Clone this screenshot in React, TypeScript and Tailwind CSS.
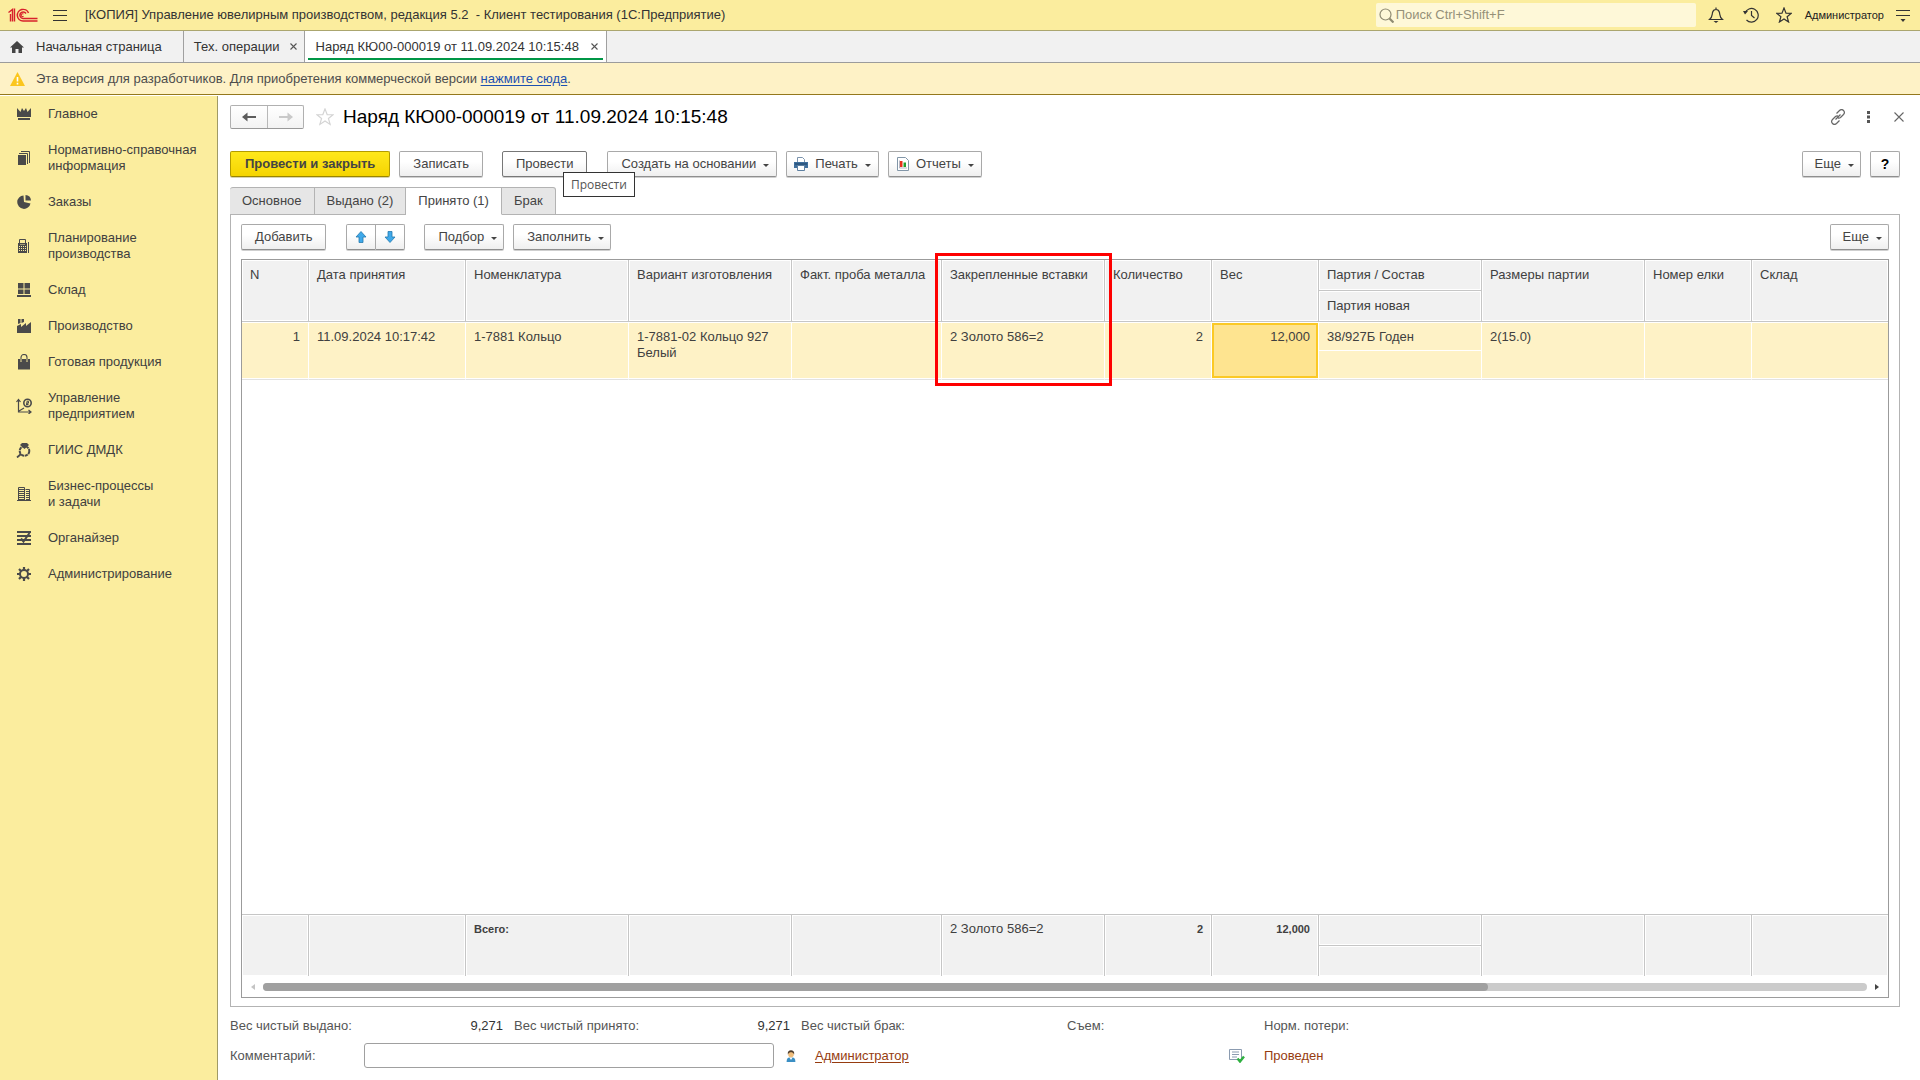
import React from "react";

const sections = [
  { icon: "crown", lines: ["Главное"] },
  { icon: "books", lines: ["Нормативно-справочная", "информация"] },
  { icon: "pie", lines: ["Заказы"] },
  { icon: "calc", lines: ["Планирование", "производства"] },
  { icon: "boxes", lines: ["Склад"] },
  { icon: "factory", lines: ["Производство"] },
  { icon: "bag", lines: ["Готовая продукция"] },
  { icon: "chart", lines: ["Управление", "предприятием"] },
  { icon: "ring", lines: ["ГИИС ДМДК"] },
  { icon: "building", lines: ["Бизнес-процессы", "и задачи"] },
  { icon: "organizer", lines: ["Органайзер"] },
  { icon: "gear", lines: ["Администрирование"] }
];

const sectionIcons: Record<string, React.ReactNode> = {
  crown: <path d="M1 2l3.500 4L6 2l2 3 2-3 1.500 4L15 2v9H1zM2 12h12v2H2z" fill="currentColor" />,
  books: (
    <>
      <path d="M2 5h8v10H2z" fill="currentColor" />
      <path d="M3 3.500h8.500V14M5 1.500h8.500V13" fill="none" stroke="currentColor" />
    </>
  ),
  pie: (
    <>
      <path d="M7.500 1.500a6.700 6.700 0 1 0 7 8L8 8z" fill="currentColor" />
      <path d="M9.500 1a6 6 0 0 1 5.500 5.500h-5.500z" fill="currentColor" />
    </>
  ),
  calc: (
    <>
      <path d="M3.500 6V1.500h6V6" fill="none" stroke="currentColor" />
      <path d="M2 5h9v10H2zM12 4h1v11h-1z" fill="currentColor" />
      <path d="M3 8.500h7M3 10.500h7M3 12.500h7" stroke="#fbed9e" strokeDasharray="1 1" />
      <path d="M4 6.500h5" stroke="#fbed9e" strokeWidth="0.500" />
    </>
  ),
  boxes: <path d="M2 1h5.500v5.500H2zM8.500 1H14v5.500H8.500zM2 7.500h5.500v4.500H2zM8.500 7.500H14V12H8.500zM1 13h14v2H1z" fill="currentColor" />,
  factory: <path d="M1 15V8l4-2v3l5-4v3l5-4v11zM2 1h2.500v4L2 6zM5.500 1H8v3L5.500 5z" fill="currentColor" />,
  bag: (
    <>
      <path d="M2 5h12v10.500H2z" fill="currentColor" />
      <path d="M5 7.500V4a3 3 0 0 1 6 0v3.500" fill="none" stroke="#fbed9e" strokeWidth="2" />
      <path d="M5 7V3.500a3 3 0 0 1 6 0V7" fill="none" stroke="currentColor" strokeWidth="1.100" />
    </>
  ),
  chart: (
    <>
      <path d="M2.500 2v12H14M0.500 4l2-2.500 2 2.500M12.500 12l2.500 2-2.500 2M3 13l5-3" fill="none" stroke="currentColor" strokeWidth="1.200" />
      <circle cx="11.500" cy="5" r="3.700" fill="none" stroke="currentColor" strokeWidth="1.600" />
      <path d="M11 7.500V3.200h1.500v2H10M10 6.500h2.500" fill="none" stroke="currentColor" />
    </>
  ),
  ring: (
    <>
      <path d="M6 1h5l2 2-4.500 4L4 3z" fill="currentColor" />
      <circle cx="8.500" cy="9" r="4.800" fill="none" stroke="currentColor" strokeWidth="2" strokeDasharray="3.200 0.700" />
      <path d="M5 12l-4 3.500" stroke="currentColor" strokeWidth="1.800" />
    </>
  ),
  building: (
    <>
      <path d="M2.500 14V1.500h6V14M9.500 3.500h4V14M1 14.500h14" fill="none" stroke="currentColor" />
      <path d="M3 3.500h5M3 5.500h5M3 7.500h5M3 9.500h5M3 11.500h5M3 13.500h5M10 5.500h3M10 7.500h3M10 9.500h3M10 11.500h3M10 13.500h3" stroke="currentColor" />
    </>
  ),
  organizer: (
    <>
      <path d="M1 2h14M1 6h14M1 10h14M1 14h14" stroke="currentColor" strokeWidth="2" />
      <path d="M5 8.500l2.500 3L13.500 3" fill="none" stroke="currentColor" strokeWidth="2" />
    </>
  ),
  gear: (
    <>
      <circle cx="8" cy="8" r="4" fill="none" stroke="currentColor" strokeWidth="2" />
      <path
        d="M8 1v3M8 12v3M1 8h3M12 8h3M3 3l2.200 2.200M10.800 10.800L13 13M13 3l-2.200 2.200M5.200 10.800L3 13"
        stroke="currentColor"
        strokeWidth="2.200"
      />
    </>
  )
};

const columns = [
  { title: "N", width: "w-[67px]" },
  { title: "Дата принятия", width: "w-[157px]" },
  { title: "Номенклатура", width: "w-[163px]" },
  { title: "Вариант изготовления", width: "w-[163px]" },
  { title: "Факт. проба металла", width: "w-[150px]" },
  { title: "Закрепленные вставки", width: "w-[163px]" },
  { title: "Количество", width: "w-[107px]" },
  { title: "Вес", width: "w-[107px]" },
  { title: "Партия / Состав", width: "w-[163px]" },
  { title: "Размеры партии", width: "w-[163px]" },
  { title: "Номер елки", width: "w-[107px]" },
  { title: "Склад", width: "w-auto" }
];

const WEIGHT = 7;
const PARTY = 8;
const row = ["1", "11.09.2024 10:17:42", "1-7881 Кольцо", "1-7881-02 Кольцо 927 Белый", "", "2 Золото 586=2", "2", "12,000", "38/927Б Годен", "2(15.0)", "", ""];
const totals = ["", "", "Всего:", "", "", "2 Золото 586=2", "2", "12,000", "", "", "", ""];
const isNumeric = (index: number) => index === 0 || index === 6 || index === WEIGHT;

// The active cell gets a yellow frame, the others only the white hairlines.
function cellFill(index: number) {
  if (index === WEIGHT) {
    return "border-b-[#e2e2e2] bg-[#fee490] shadow-[inset_0_1px_0_#fff,inset_0_-1px_0_#fff,inset_0_3px_0_#fbc926,inset_0_-3px_0_#fbc926,inset_2px_0_0_#fbc926,inset_-2px_0_0_#fbc926]";
  }
  if (index === PARTY) {
    return "bg-[#fef2c6] shadow-[inset_0_1px_0_#fff]";
  }
  return "border-b-[#e2e2e2] bg-[#fef2c6] shadow-[inset_0_1px_0_#fff,inset_0_-1px_0_#fff]";
}

function Caret() {
  return (
    <svg className="mt-[3px] h-[3px] w-[6px] shrink-0" viewBox="0 0 6 3">
      <path d="M0 0h6L3 3z" fill="#444" />
    </svg>
  );
}

function ToolButton({ children, className = "px-[13px]", menu = false }: { children: React.ReactNode; className?: string; menu?: boolean }) {
  return (
    <button
      className={`flex h-[26px] shrink-0 items-center rounded-[2px] border border-[#a9a9a9] border-b-[#8f8f8f] bg-linear-to-b from-white from-40% to-[#efefef] text-[#444] shadow-[0_1px_0_#cfcfcf] ${menu ? "gap-[7px]" : ""} ${className}`}
      type="button"
    >
      {children}
      {menu && <Caret />}
    </button>
  );
}

function Logo() {
  return (
    <svg className="h-[14px] w-[30px]" viewBox="0 0 30 14" fill="none" stroke="#d8202b">
      <path d="M0.500 4.500L4.500 1.500V13.500M2.500 6v7.500M4.500 1v12.500M6.500 0.500v13" strokeWidth="1.400" />
      <path d="M20.500 5a5.800 5.800 0 1 0-5.500 8h14.500" strokeWidth="1.500" />
      <path d="M18 5.500a3.300 3.300 0 1 0-3 5h14.500" strokeWidth="1.500" />
      <path d="M15.500 6.200a1.400 1.400 0 1 0 0 2" strokeWidth="1.100" />
    </svg>
  );
}

function TopBar() {
  return (
    <header className="flex h-[31px] shrink-0 items-center border-b border-[#aba66f] bg-[#fbed9e] pr-[10px] pl-2">
      <Logo />
      <button aria-label="Главное меню" className="ml-[15px] flex w-[14px] flex-col gap-1" type="button">
        <span className="h-px bg-[#333]" />
        <span className="h-px bg-[#333]" />
        <span className="h-px bg-[#333]" />
      </button>
      <h1 className="ml-[18px] whitespace-pre">[КОПИЯ] Управление ювелирным производством, редакция 5.2  - Клиент тестирования (1С:Предприятие)</h1>
      <label className="mr-3 ml-auto flex h-6 w-[320px] items-center rounded-[2px] bg-[#fef8d8] pl-[3px]">
        <svg className="size-[15px]" viewBox="0 0 15 15" fill="none" stroke="#8f8b72">
          <circle cx="6.500" cy="6.500" r="5.500" strokeWidth="1.200" />
          <path d="M10.500 10.500l4 4" strokeWidth="2.200" />
        </svg>
        <input aria-label="Поиск" className="ml-[2px] min-w-0 flex-1 bg-transparent outline-none placeholder:text-[#959078]" placeholder="Поиск Ctrl+Shift+F" />
      </label>
      <button aria-label="Уведомления" className="mr-[19px]" type="button">
        <svg className="size-4" viewBox="0 0 16 16" fill="none" stroke="#333" strokeWidth="1.200">
          <path d="M1.500 12.500c3-2.500 2.500-4 3-7C5 3.300 6.200 2.500 8 2.500s3 .8 3.500 3c.500 3 0 4.500 3 7zM8 0.500v2" />
          <path d="M5.500 14h5L8 16z" fill="#333" stroke="none" />
        </svg>
      </button>
      <button aria-label="История" className="mr-[17px]" type="button">
        <svg className="size-4" viewBox="0 0 16 16" fill="none" stroke="#333" strokeWidth="1.200">
          <path d="M2 6a6.800 6.800 0 1 1 1.500 7M8.500 4v4.500l3 2.500" />
          <path d="M0 4h5L2 7.500z" fill="#333" stroke="none" />
        </svg>
      </button>
      <button aria-label="Избранное" className="mr-[13px]" type="button">
        <svg className="size-4" viewBox="0 0 16 16" fill="none" stroke="#333" strokeWidth="1.200">
          <path d="M8 1l2 5.200 5.300.1-4.200 3.400 1.500 5.300L8 12l-4.600 3 1.500-5.300L.7 6.300 6 6.200z" />
        </svg>
      </button>
      <span className="text-[11px] text-[#222]">Администратор</span>
      <button aria-label="Настройки" className="ml-3" type="button">
        <svg className="h-4 w-[14px]" viewBox="0 0 14 16" fill="none" stroke="#333">
          <path d="M0 3.500h14M0 8.500h14" strokeWidth="1.200" />
          <path d="M4.500 12h5L7 15z" fill="#333" stroke="none" />
        </svg>
      </button>
    </header>
  );
}

function CloseMark() {
  return (
    <svg className="size-[7px]" viewBox="0 0 7 7" stroke="#555" strokeWidth="1.100">
      <path d="M0.500 0.500l6 6M6.500 0.500l-6 6" />
    </svg>
  );
}

function WindowTabs() {
  return (
    <nav className="flex h-8 shrink-0 border-b border-[#9c9c9c] bg-[#f1f1f1]">
      <button className="flex items-center gap-3 border-r border-[#a0a0a0] pr-[21px] pl-[10px]" type="button">
        <svg className="h-[14px] w-[14px]" viewBox="0 0 14 14">
          <path d="M7 1l7 6.500h-2V13H8.500V9h-3v4H2V7.500H0z" fill="#444" />
        </svg>
        Начальная страница
      </button>
      <button className="flex items-center gap-[10px] border-r border-[#a0a0a0] pr-[7px] pl-[10px]" type="button">
        Тех. операции
        <CloseMark />
      </button>
      <button className="flex border-r border-[#a0a0a0] bg-white px-[3px]" type="button">
        <span className="flex h-[29px] items-center gap-3 border-b-2 border-[#009646] pt-1 pr-[5px] pl-2">
          Наряд КЮ00-000019 от 11.09.2024 10:15:48
          <CloseMark />
        </span>
      </button>
    </nav>
  );
}

function Sidebar() {
  return (
    <aside className="mt-px flex w-[218px] shrink-0 flex-col gap-5 border-r border-[#a09a66] bg-[#fbed9e] pt-[10px] pl-4">
      {sections.map((section) => (
        <a className="flex items-center gap-4 leading-4 text-[#404040]" href="#" key={section.icon}>
          <svg className="size-4 shrink-0 text-[#4a4a4a]" viewBox="0 0 16 16">
            {sectionIcons[section.icon]}
          </svg>
          <span>
            {section.lines.map((line) => (
              <span className="block" key={line}>
                {line}
              </span>
            ))}
          </span>
        </a>
      ))}
    </aside>
  );
}

function FormTitle() {
  return (
    <div className="-mr-1 flex h-6 items-center">
      <div className="flex h-6 rounded-[2px] border border-[#b0b0b0] border-b-[#999] bg-linear-to-b from-white to-[#f3f3f3]">
        <button aria-label="Назад" className="flex w-[37px] items-center justify-center border-r border-[#b8b8b8]" type="button">
          <svg className="h-[10px] w-[14px]" viewBox="0 0 14 10">
            <path d="M0 5l5.500-4.500V4H14v2H5.500v3.500z" fill="#5c5c5c" />
          </svg>
        </button>
        <button aria-label="Вперед" className="flex w-[35px] items-center justify-center" type="button">
          <svg className="h-[10px] w-[14px]" viewBox="0 0 14 10">
            <path d="M14 5L8.500.5V4H0v2h8.500v3.500z" fill="#c9c9c9" />
          </svg>
        </button>
      </div>
      <button aria-label="В избранное" className="ml-3" type="button">
        <svg className="size-[18px]" viewBox="0 0 20 20" fill="none" stroke="#d4d4d4" strokeWidth="1.300">
          <path d="M10 1l2.400 6.300 6.600.2-5.200 4.100 1.900 6.600L10 14.400l-5.700 3.800 1.900-6.600L1 7.500l6.600-.2z" />
        </svg>
      </button>
      <h2 className="ml-[9px] text-[19px] text-black">Наряд КЮ00-000019 от 11.09.2024 10:15:48</h2>
      <button aria-label="Ссылка" className="ml-auto" type="button">
        <svg className="size-4" viewBox="0 0 16 16" fill="none" stroke="#666" strokeWidth="1.200">
          <path d="M6.500 4.500l3-3c1.500-1.300 3-1 4 0s1.300 2.500 0 4l-3 3c-.8.700-1.700.8-2.500.500M9.500 11.500l-3 3c-1.500 1.300-3 1-4 0s-1.300-2.500 0-4l3-3c.8-.7 1.700-.8 2.500-.5M5.500 10.500l5-5" />
        </svg>
      </button>
      <button aria-label="Действия" className="ml-[21px]" type="button">
        <svg className="h-3 w-[3px]" viewBox="0 0 3 12">
          <path d="M0 0h3v3H0zM0 4.500h3v3H0zM0 9h3v3H0z" fill="#555" />
        </svg>
      </button>
      <button aria-label="Закрыть" className="ml-6" type="button">
        <svg className="size-[10px]" viewBox="0 0 10 10" stroke="#666" strokeWidth="1.100">
          <path d="M0.500 0.500l9 9M9.500 0.500l-9 9" />
        </svg>
      </button>
    </div>
  );
}

function CommandBar() {
  return (
    <div className="mt-[22px] flex">
      <button
        className="h-[26px] rounded-[2px] border border-[#b39b00] border-b-[#9a8500] bg-linear-to-b from-[#ffe81a] to-[#f5d400] px-[14px] font-bold text-[#444] shadow-[0_1px_0_#d8d3b0]"
        type="button"
      >
        Провести и закрыть
      </button>
      <div className="ml-[9px] flex">
        <ToolButton>Записать</ToolButton>
      </div>
      <div className="relative ml-[19px] flex">
        <button
          className="h-[26px] rounded-[2px] border border-[#777] bg-linear-to-b from-white from-40% to-[#efefef] px-[13px] text-[#444] shadow-[0_1px_0_#cfcfcf]"
          type="button"
        >
          Провести
        </button>
        <span className="absolute top-[21px] left-[61px] z-10 h-[25px] border border-[#333] bg-white px-[7px] font-['Open_Sans',sans-serif] text-[12px] leading-[23px] text-[#555]" role="tooltip">
          Провести
        </span>
      </div>
      <div className="ml-5 flex gap-[9px]">
        <ToolButton className="pr-[7px] pl-[13px]" menu>
          Создать на основании
        </ToolButton>
        <ToolButton className="px-[7px]" menu>
          <svg className="size-[14px]" viewBox="0 0 14 14">
            <path d="M3.500 5V.5h5l2 2V5" fill="#fff" stroke="#7b93ad" />
            <path d="M0 5h14v6H0z" fill="#3f6e9c" />
            <path d="M1 7h12" stroke="#1f4468" />
            <path d="M3.500 8.500h7v5h-7z" fill="#fff" stroke="#5d7fa1" />
          </svg>
          Печать
        </ToolButton>
        <ToolButton className="pr-[7px] pl-2" menu>
          <svg className="h-[14px] w-3" viewBox="0 0 12 14">
            <path d="M.5.5h8l3 3v10H.5z" fill="#fff" stroke="#8296a8" />
            <path d="M2.500 3.500v7.500h7.500" fill="none" stroke="#99a" strokeWidth=".7" />
            <path d="M3 4h2.500v6H3z" fill="#e8301c" />
            <path d="M6.500 5.500H9V10H6.500z" fill="#22a02c" />
          </svg>
          Отчеты
        </ToolButton>
      </div>
      <div className="ml-auto flex gap-[9px]">
        <ToolButton className="pr-[6px] pl-3" menu>
          Еще
        </ToolButton>
        <ToolButton className="w-[30px] justify-center text-[14px] font-bold text-black">?</ToolButton>
      </div>
    </div>
  );
}

function PageTabs() {
  const tab = "h-7 border border-[#b3b3b3] border-l-0 bg-[#e6e6e6] px-3";
  return (
    <div className="relative z-[1] mt-[10px] -mb-px flex text-[#444]" role="tablist">
      <button className={`${tab} rounded-tl-[3px] border-l`} role="tab" type="button">
        Основное
      </button>
      <button className={tab} role="tab" type="button">
        Выдано (2)
      </button>
      <button aria-selected className="h-7 border border-l-0 border-[#b3b3b3] border-b-white bg-white px-3" role="tab" type="button">
        Принято (1)
      </button>
      <button className={`${tab} rounded-tr-[3px]`} role="tab" type="button">
        Брак
      </button>
    </div>
  );
}

function TableToolbar() {
  return (
    <div className="flex">
      <ToolButton>Добавить</ToolButton>
      <div className="ml-5 flex">
        <ToolButton className="w-[30px] justify-center rounded-r-none">
          <svg aria-label="Вверх" className="size-3" viewBox="0 0 12 12">
            <path d="M6 .5l5 5.500H8v5.500H4V6H1z" fill="#3fa9ea" stroke="#2579ad" strokeWidth=".8" />
          </svg>
        </ToolButton>
        <ToolButton className="w-[29px] justify-center rounded-l-none border-l-0">
          <svg aria-label="Вниз" className="size-3" viewBox="0 0 12 12">
            <path d="M6 11.500L1 6h3V.5h4V6h3z" fill="#3fa9ea" stroke="#2579ad" strokeWidth=".8" />
          </svg>
        </ToolButton>
      </div>
      <div className="ml-[19px] flex gap-[9px]">
        <ToolButton className="pr-[6px] pl-[13px]" menu>
          Подбор
        </ToolButton>
        <ToolButton className="pr-[6px] pl-[13px]" menu>
          Заполнить
        </ToolButton>
      </div>
      <div className="ml-auto flex">
        <ToolButton className="pr-[6px] pl-3" menu>
          Еще
        </ToolButton>
      </div>
    </div>
  );
}

function ItemsTable() {
  const head = "border-r border-b border-[#c6c6c6] bg-[#f1f1f1] px-2 pt-[7px] text-left align-top font-normal leading-4 whitespace-nowrap shadow-[inset_0_0_0_1px_#fff]";
  const foot = "border-t border-r border-[#c6c6c6] bg-[#f1f1f1] px-2 pt-[6px] align-top leading-4 shadow-[inset_0_0_0_1px_#fff] last:border-r-0";
  return (
    <div className="relative mt-[9px] flex min-h-0 flex-1 flex-col border border-[#9b9b9b] text-[#404040]">
      <div className="min-h-0 flex-1">
        <table className="h-full w-full table-fixed border-separate border-spacing-0">
          <colgroup>
            {columns.map((column) => (
              <col className={column.width} key={column.title} />
            ))}
          </colgroup>
          <thead>
            <tr className="h-[31px]">
              {columns.map((column, index) => (
                <th className={`${head} last:border-r-0`} key={column.title} rowSpan={index === PARTY ? 1 : 2}>
                  {column.title}
                </th>
              ))}
            </tr>
            <tr className="h-[31px]">
              <th className={head}>Партия новая</th>
            </tr>
          </thead>
          <tbody>
            <tr className="h-[29px]">
              {row.map((value, index) => (
                <td
                  className={`border-r border-b border-white px-2 pt-[7px] align-top leading-4 last:border-r-0 ${isNumeric(index) ? "text-right" : ""} ${cellFill(index)}`}
                  key={index}
                  rowSpan={index === PARTY ? 1 : 2}
                >
                  {value}
                </td>
              ))}
            </tr>
            <tr className="h-[29px]">
              <td className="border-r border-b border-white border-b-[#e2e2e2] bg-[#fef2c6] shadow-[inset_0_-1px_0_#fff]" />
            </tr>
            <tr>
              <td colSpan={12} />
            </tr>
          </tbody>
          <tfoot>
            <tr className="h-[31px]">
              {totals.map((value, index) => (
                <td
                  className={`${foot} ${isNumeric(index) ? "text-right" : ""} ${index === 5 ? "" : "text-[11px] font-bold"}`}
                  key={index}
                  rowSpan={index === PARTY ? 1 : 2}
                >
                  {value}
                </td>
              ))}
            </tr>
            <tr className="h-[31px]">
              <td className="border-t border-r border-[#c6c6c6] bg-[#f1f1f1] shadow-[inset_0_0_0_1px_#fff]" />
            </tr>
          </tfoot>
        </table>
      </div>
      <div className="flex h-[21px] shrink-0 items-center px-[9px]">
        <svg className="h-[6px] w-1" viewBox="0 0 4 6">
          <path d="M4 0v6L0 3z" fill="#c4c4c4" />
        </svg>
        <div className="mx-2 h-2 flex-1 rounded-full bg-[#cbcbcb]">
          <div className="h-2 w-[76.400%] rounded-full bg-[#a0a0a0]" />
        </div>
        <svg className="h-[6px] w-1" viewBox="0 0 4 6">
          <path d="M0 0v6l4-3z" fill="#444" />
        </svg>
      </div>
      <div className="pointer-events-none absolute top-[-7px] left-[693px] h-[133px] w-[177px] border-[3px] border-[#fe0000]" />
    </div>
  );
}

function Summary() {
  return (
    <footer className="shrink-0 text-[#555]">
      <dl className="mt-[11px] flex h-4 leading-4">
        <dt className="w-[184px]">Вес чистый выдано:</dt>
        <dd className="w-[89px] text-right text-[#333]">9,271</dd>
        <dt className="ml-[11px] w-[184px]">Вес чистый принято:</dt>
        <dd className="w-[92px] text-right text-[#333]">9,271</dd>
        <dt className="ml-[11px] w-[266px]">Вес чистый брак:</dt>
        <dt className="w-[197px]">Съем:</dt>
        <dt>Норм. потери:</dt>
      </dl>
      <div className="mt-[9px] mb-3 flex items-center">
        <label className="w-[134px]" htmlFor="comment">
          Комментарий:
        </label>
        <input className="h-[25px] w-[410px] rounded-[3px] border border-[#a0a0a0] px-2 outline-none" id="comment" />
        <svg className="ml-3 h-3 w-[10px]" viewBox="0 0 11 15">
          <path d="M0 15c0-4 1.500-5.500 3.500-5.500h4c2 0 3.500 1.500 3.500 5.500z" fill="#3b8fc4" />
          <path d="M3.500 9.500l2 3 2-3z" fill="#fff" />
          <circle cx="5.500" cy="5.500" r="3.500" fill="#efbd7c" />
          <path d="M1.500 5.500C1 2 3 .3 5.500.3S10 2 9.500 5.500C8.500 3.500 7 2.800 5.500 2.800S2.500 3.500 1.500 5.500z" fill="#4d3b2a" />
        </svg>
        <a className="ml-[19px] w-[414px] text-[#963c10] underline underline-offset-2" href="#">
          Администратор
        </a>
        <svg className="h-[14px] w-4" viewBox="0 0 16 14">
          <path d="M.5.500h12v10H.5z" fill="#fff" stroke="#8b9bb0" />
          <path d="M3 3h7M3 5.500h7M3 8h5" stroke="#8b9bb0" />
          <path d="M8.500 9.500l2.500 3 4-5" fill="none" stroke="#2fb040" strokeWidth="2.400" />
        </svg>
        <span className="ml-[19px] text-[#963c10]">Проведен</span>
      </div>
    </footer>
  );
}

export default function App() {
  return (
    <div className="flex h-screen flex-col bg-white font-['Liberation_Sans',Arial,sans-serif] text-[13px] text-[#333]">
      <TopBar />
      <WindowTabs />
      <div className="flex h-8 shrink-0 items-center border-b border-[#94781c] bg-[#fef2c6] pl-[10px] text-[#4d4d4d]">
        <svg className="mr-[11px] h-[14px] w-[15px]" viewBox="0 0 15 14">
          <path d="M7.500 0L15 14H0z" fill="#fbc61e" />
          <path d="M7.500 5v4.500M7.500 10.700v1.800" stroke="#fff" strokeWidth="1.600" />
        </svg>
        <p>
          Эта версия для разработчиков. Для приобретения коммерческой версии{" "}
          <a className="text-[#1d50b0] underline underline-offset-2" href="#">
            нажмите сюда
          </a>
          .
        </p>
      </div>
      <div className="flex min-h-0 flex-1">
        <Sidebar />
        <main className="flex min-w-0 flex-1 flex-col pt-[10px] pr-5 pl-3">
          <FormTitle />
          <CommandBar />
          <PageTabs />
          <section className="flex min-h-0 flex-1 flex-col border border-[#b3b3b3] px-[10px] pt-[9px] pb-2">
            <TableToolbar />
            <ItemsTable />
          </section>
          <Summary />
        </main>
      </div>
    </div>
  );
}
